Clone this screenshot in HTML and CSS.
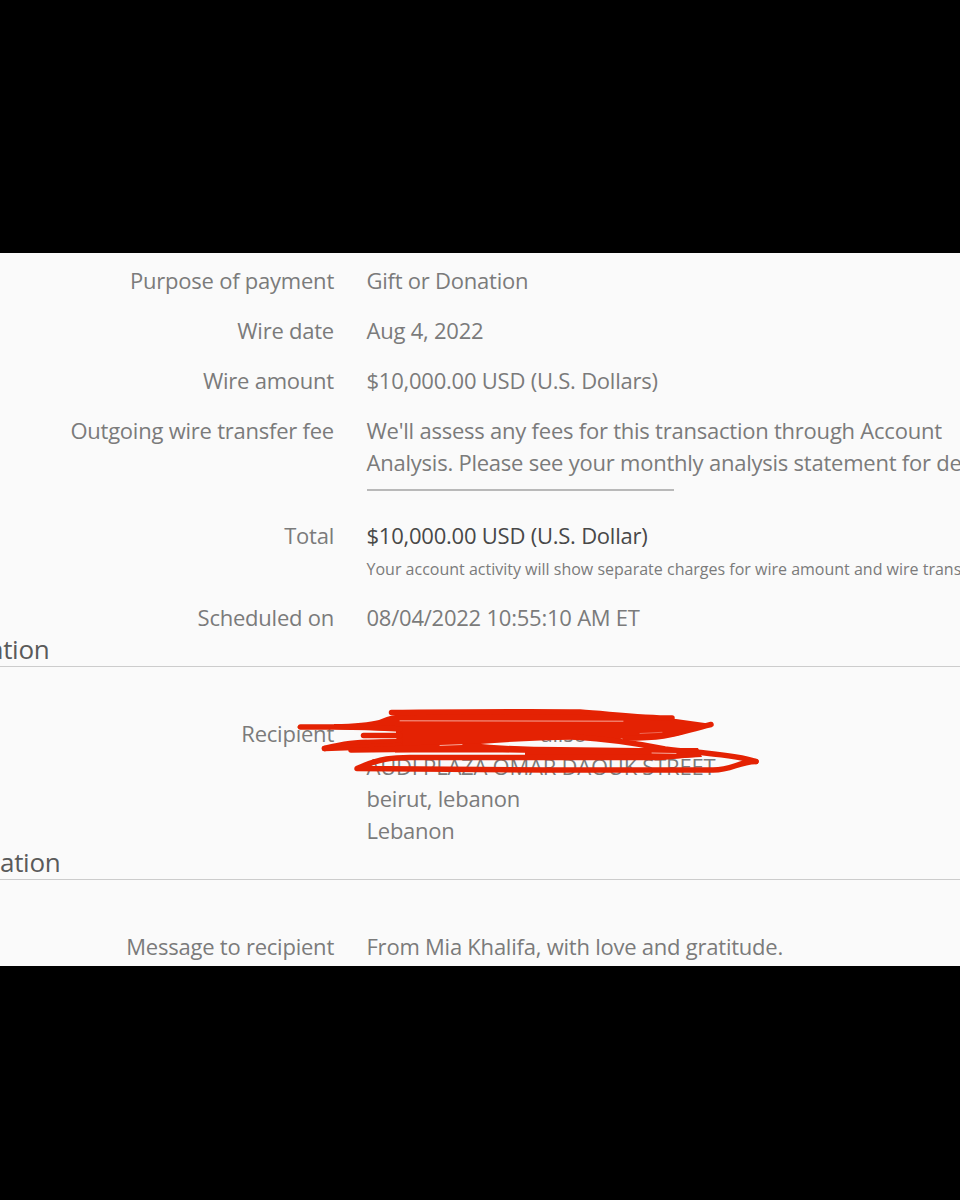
FILE: index.html
```html
<!DOCTYPE html>
<html lang="en">
<head>
    <meta charset="utf-8" />
    <title>Wire details</title>
    <link rel="stylesheet" href="styles.css">
</head>
<body>

<div class="sheet">

    <dl class="details">
        <dt>Purpose of payment</dt>
        <dd>Gift or Donation</dd>

        <dt>Wire date</dt>
        <dd>Aug 4, 2022</dd>

        <dt>Wire amount</dt>
        <dd>$10,000.00 USD (U.S. Dollars)</dd>

        <dt>Outgoing wire transfer fee</dt>
        <dd>We'll assess any fees for this transaction through Account<br />
            Analysis. Please see your monthly analysis statement for details.
            <hr class="sum" />
        </dd>

        <dt>Total</dt>
        <dd><span class="total">$10,000.00 USD (U.S. Dollar)</span>
            <small>Your account activity will show separate charges for wire amount and wire transfer fee.</small>
        </dd>

        <dt>Scheduled on</dt>
        <dd>08/04/2022 10:55:10 AM ET</dd>
    </dl>

    <h2 class="first"><span>ation</span></h2>

    <dl class="details recipient">
        <dt>Recipient</dt>
        <dd>
            <span class="name">aliso</span><br />
            <span class="street">AUDI PLAZA OMAR DAOUK STREET</span><br />
            beirut, lebanon<br />
            Lebanon
            <!-- red marker over name and street -->
            <svg class="marker" width="480" height="80" viewBox="290 700 480 80">
                <path class="ink" d="M334 724 C355 724 370 722 379 720 C386 717 392 715 402 714 L580 713 L640 717 L676 719 L712 724 L690 731 C678 737 668 738 640 738 L625 738 L610 741 C570 738 520 741 480 744 L440 745 L395 749 L385 745 L396 740 L396 731 L334 729 Z" />
                <path class="stroke" d="M391.5 712.5 C450 712 530 711 580 712 C610 714 640 718 672 718" />
                <path class="stroke" d="M300.5 727 L334 727 L370 727.5 L400 729" />
                <path class="stroke" d="M363.5 735.5 L400 735.5" />
                <path class="stroke" d="M324.5 748.5 C345 743.5 355 742.5 375 742 L400 741" />
                <path class="stroke" d="M324.5 748.5 L352 747.5 L400 745.5" />
                <path class="stroke" d="M351 750 C400 749.5 430 749 480 748.5 L530 750" />
                <path class="stroke" d="M625 738 C672 738 675 733 711 724.5" />
                <path class="stroke" d="M575 737 C610 739 640 744 665 749 C680 751 695 752 705 753 C725 755 742 757 756 761.5" />
                <path class="ink" d="M395 746 L470 743 C500 746 530 747 560 747 L640 748 L698 748 L702 757 L640 760 L525 760 L525 752.5 L395 752.5 Z" />
                <path class="stroke" d="M756 761.5 C737 762 733 770 713 770 C650 770.5 560 770 480 769.5 L357 768.5 C380 758 395 757.5 410 757.5 L560 757.5 L660 757.5 L698 754" />
                <path class="gap" d="M400 720.8 L623 721.2" />
                <path class="gap" d="M367 739 L396 738.5" />
                <path class="gap" d="M440 745.5 L462 744.5" />
                <path class="gap" d="M652 753 L676 753.5" />
                <path class="gap faint" d="M640 733.5 L662 732.3" />
            </svg>
        </dd>
    </dl>

    <h2 class="second"><span>ation</span></h2>

    <dl class="details message">
        <dt>Message to recipient</dt>
        <dd>From Mia Khalifa, with love and gratitude.</dd>
    </dl>

</div>

</body>
</html>
```
FILE: styles.css
```css
body {
margin: 0;
padding-top: 253px;
background-color: #000000;
font-family: "Open Sans", sans-serif;
font-size: 22px;
line-height: 32.4px;
letter-spacing: -0.23px;
color: #7b7b7b;
}

.sheet {
height: 713px;
overflow: hidden;
background-color: #fafafa;
}

.details {
display: grid;
grid-template-columns: 334px 1fr;
column-gap: 32.5px;
row-gap: 17.6px;
margin: 0;
padding-top: 11px;
}

dt {
text-align: right;
}

dd {
margin: 0;
white-space: nowrap;
position: relative;
}

.sum {
width: 307px;
height: 2px;
margin: 10px 0 11px 0;
border: 0;
background-color: #b9b9b9;
}

.total {
display: block;
color: #484848;
}

small {
display: block;
padding-top: 1px;
margin-bottom: -2px;
font-size: 16px;
letter-spacing: 0;
}

h2 {
margin: 0;
height: 33px;
border-bottom: 1px solid #cccccc;
font-size: 26px;
font-weight: normal;
letter-spacing: -0.3px;
color: #5a5a5a;
}

.first span {
margin-left: -11px;
}

.recipient {
padding-top: 50px;
}

.second {
margin-top: -1px;
}

.name {
margin-left: 174px;
}

.marker {
position: absolute;
left: -76.5px;
top: -17px;
}

.ink {
fill: #e42203;
}

.stroke {
fill: none;
stroke: #e42203;
stroke-width: 5.5;
stroke-linecap: round;
stroke-linejoin: round;
}

.gap {
fill: none;
stroke: #fac8bf;
stroke-width: 0.8;
stroke-linecap: round;
}

.faint {
stroke: #f07a68;
}

.message {
padding-top: 50px;
}
```
